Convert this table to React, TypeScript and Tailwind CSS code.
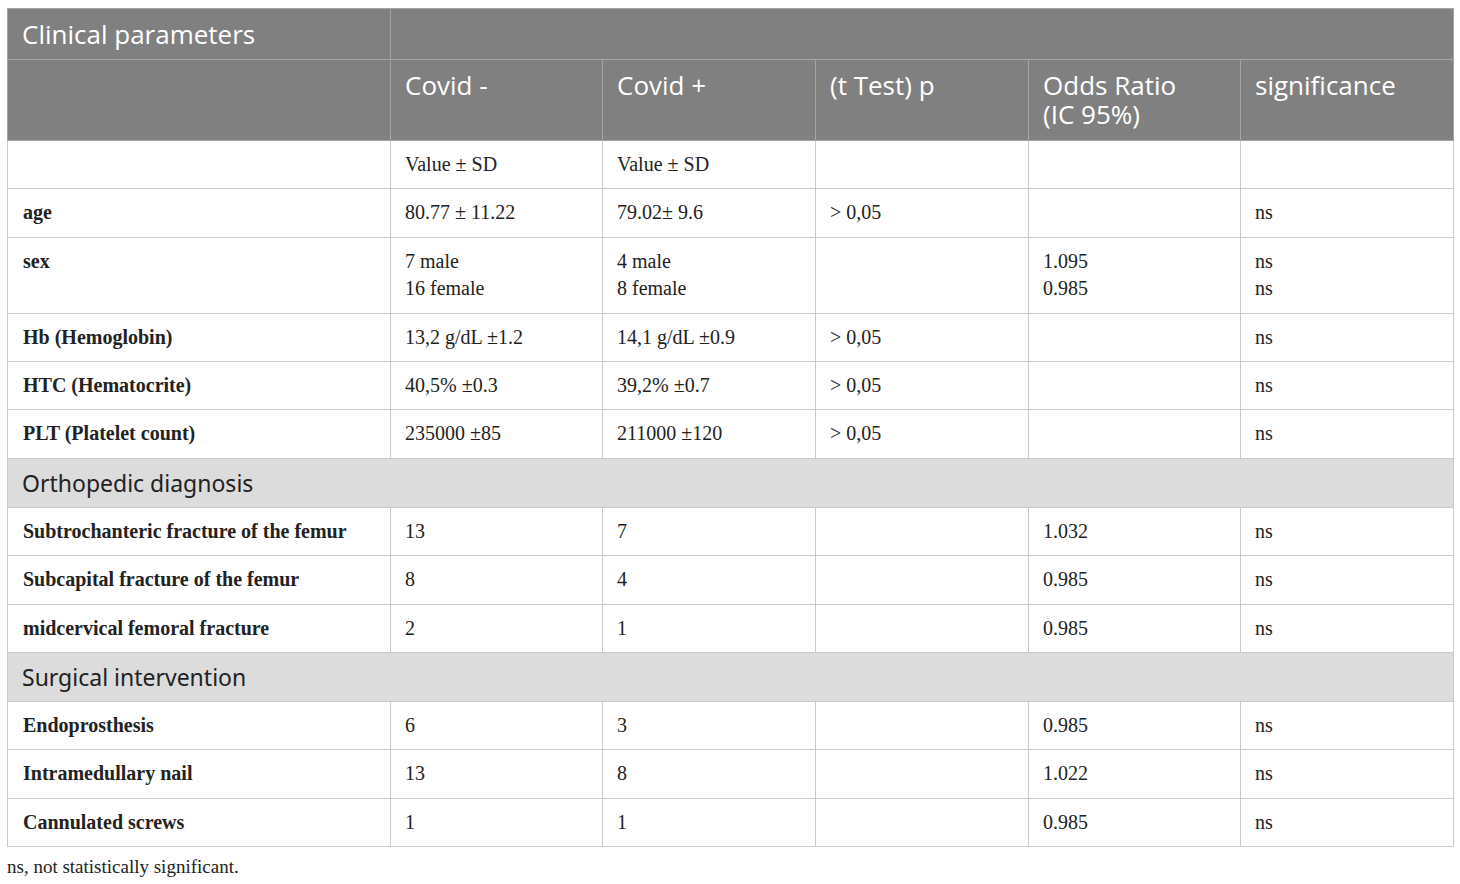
import React from "react";

type Row = {
  label: string;
  neg: string[];
  pos: string[];
  p?: string;
  or?: string[];
  sig: string[];
};

const clinical: Row[] = [
  { label: "", neg: ["Value ± SD"], pos: ["Value ± SD"], sig: [] },
  { label: "age", neg: ["80.77 ± 11.22"], pos: ["79.02± 9.6"], p: "> 0,05", sig: ["ns"] },
  { label: "sex", neg: ["7 male", "16 female"], pos: ["4 male", "8 female"], or: ["1.095", "0.985"], sig: ["ns", "ns"] },
  { label: "Hb (Hemoglobin)", neg: ["13,2 g/dL ±1.2"], pos: ["14,1 g/dL ±0.9"], p: "> 0,05", sig: ["ns"] },
  { label: "HTC (Hematocrite)", neg: ["40,5% ±0.3"], pos: ["39,2% ±0.7"], p: "> 0,05", sig: ["ns"] },
  { label: "PLT (Platelet count)", neg: ["235000 ±85"], pos: ["211000 ±120"], p: "> 0,05", sig: ["ns"] },
];

const ortho: Row[] = [
  { label: "Subtrochanteric fracture of the femur", neg: ["13"], pos: ["7"], or: ["1.032"], sig: ["ns"] },
  { label: "Subcapital fracture of the femur", neg: ["8"], pos: ["4"], or: ["0.985"], sig: ["ns"] },
  { label: "midcervical femoral fracture", neg: ["2"], pos: ["1"], or: ["0.985"], sig: ["ns"] },
];

const surgical: Row[] = [
  { label: "Endoprosthesis", neg: ["6"], pos: ["3"], or: ["0.985"], sig: ["ns"] },
  { label: "Intramedullary nail", neg: ["13"], pos: ["8"], or: ["1.022"], sig: ["ns"] },
  { label: "Cannulated screws", neg: ["1"], pos: ["1"], or: ["0.985"], sig: ["ns"] },
];

const sans = "font-['Open_Sans','Lato',sans-serif]";
const td = "border border-[#cacaca] px-[14px] py-[10px] align-top leading-[27.4px]";
const th = `border border-[#a3a3a3] px-[14px] py-[10.5px] align-top text-left font-normal leading-[29px] text-white text-[26px] ${sans}`;

function Lines({ items }: { items?: string[] }) {
  if (!items || items.length === 0) return <span>&nbsp;</span>;
  return (
    <>
      {items.map((t, i) => (
        <div key={i}>{t}</div>
      ))}
    </>
  );
}

function DataRow({ row }: { row: Row }) {
  return (
    <tr>
      <td className={`${td} pl-[15px] font-bold`}>{row.label || "\u00a0"}</td>
      <td className={td}>
        <Lines items={row.neg} />
      </td>
      <td className={td}>
        <Lines items={row.pos} />
      </td>
      <td className={td}>{row.p || "\u00a0"}</td>
      <td className={td}>
        <Lines items={row.or} />
      </td>
      <td className={td}>
        <Lines items={row.sig} />
      </td>
    </tr>
  );
}

function Section({ title }: { title: string }) {
  return (
    <tr className="bg-[#dcdcdc]">
      <td
        colSpan={6}
        className="border border-[#cacaca] px-[14px] py-[10px] align-top font-['Noto_Sans','Open_Sans',sans-serif] text-[23px] leading-[28px] text-[#222]"
      >
        {title}
      </td>
    </tr>
  );
}

export default function App() {
  return (
    <div className="min-h-screen bg-white pl-[7px] pt-[8px] font-['Liberation_Serif',serif] text-[20px] text-[#222]">
      <table className="w-[1446px] table-fixed border-collapse">
        <colgroup>
          <col className="w-[383px]" />
          <col className="w-[212px]" />
          <col className="w-[213px]" />
          <col className="w-[213px]" />
          <col className="w-[212px]" />
          <col className="w-[213px]" />
        </colgroup>
        <thead className="bg-[#808080]">
          <tr>
            <th className={th}>Clinical parameters</th>
            <th className={th} colSpan={5}></th>
          </tr>
          <tr>
            <th className={`${th} h-[81px]`}></th>
            <th className={th}>Covid -</th>
            <th className={th}>Covid +</th>
            <th className={th}>(t Test) p</th>
            <th className={th}>
              Odds Ratio
              <br />
              (IC 95%)
            </th>
            <th className={th}>significance</th>
          </tr>
        </thead>
        <tbody>
          {clinical.map((r, i) => (
            <DataRow key={i} row={r} />
          ))}
          <Section title="Orthopedic diagnosis" />
          {ortho.map((r, i) => (
            <DataRow key={i} row={r} />
          ))}
          <Section title="Surgical intervention" />
          {surgical.map((r, i) => (
            <DataRow key={i} row={r} />
          ))}
        </tbody>
      </table>
      <p className="mt-[7px] text-[19px] leading-[26px] text-[#222]">
        ns, not statistically significant.
      </p>
    </div>
  );
}
